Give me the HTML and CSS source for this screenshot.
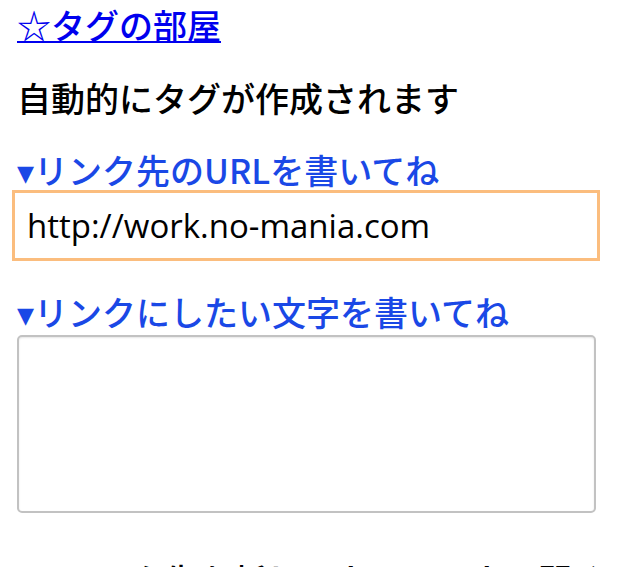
FILE: index.html
```html
<!DOCTYPE html>
<html lang="ja">
<head>
<meta charset="utf-8">
<title>タグの部屋</title>
<link rel="stylesheet" href="styles.css">
</head>
<body>
<div class="page">
  <a class="top-link" href="#">☆タグの部屋</a>
  <p class="lead">自動的にタグが作成されます</p>
  <label class="label label-url" for="url">▾リンク先のURLを書いてね</label>
  <input class="url-input" id="url" type="text" value="http://work.no-mania.com">
  <label class="label label-text" for="txt">▾リンクにしたい文字を書いてね</label>
  <textarea class="text-area" id="txt"></textarea>
  <label class="option" for="blank">
    <input class="option-check" id="blank" type="checkbox">
    <span class="option-text">リンク先を新しいウィンドウで開く</span>
  </label>
</div>
</body>
</html>
```
FILE: styles.css
```css
html, body {
  margin: 0;
  padding: 0;
  background: #ffffff;
}
body {
  font-family: "Noto Sans CJK JP", "Noto Sans", sans-serif;
  font-weight: 500;
  color: #000;
  overflow: hidden;
}
.page {
  display: flex;
  flex-direction: column;
  align-items: flex-start;
  padding: 5px 0 0 17px;
}
.top-link {
  display: block;
  font-size: 34px;
  line-height: 40px;
  color: #0000ee;
  text-decoration: underline;
  text-decoration-thickness: 2px;
  text-underline-offset: 2px;
}
.lead {
  margin: 33px 0 0;
  font-size: 34px;
  line-height: 40px;
}
.label {
  display: block;
  font-size: 34px;
  line-height: 40px;
  color: #1a48e6;
}
.label-url {
  margin-top: 32px;
}
.url-input {
  box-sizing: border-box;
  margin: 0 0 0 -5px;
  width: 588px;
  height: 71px;
  border: 3px solid #fbbd7e;
  border-radius: 0;
  padding: 0 0 0 12px;
  font-family: "Open Sans", sans-serif;
  font-weight: 400;
  font-size: 33px;
  color: #000;
  outline: none;
  background: #fff;
}
.label-text {
  margin-top: 31px;
}
.text-area {
  box-sizing: border-box;
  margin: 3px 0 0;
  width: 579px;
  height: 178px;
  border: 2px solid #c2c2c2;
  border-radius: 5px;
  box-shadow: inset 0 1px 2px rgba(0,0,0,0.10);
  resize: none;
  background: #fff;
}
.option {
  display: flex;
  align-items: flex-end;
  margin: 47px 0 0;
  height: 40px;
  white-space: nowrap;
}
.option-check {
  width: 24px;
  height: 24px;
  margin: 0 21px 4px 0;
}
.option-text {
  font-size: 34px;
  line-height: 40px;
}
```
